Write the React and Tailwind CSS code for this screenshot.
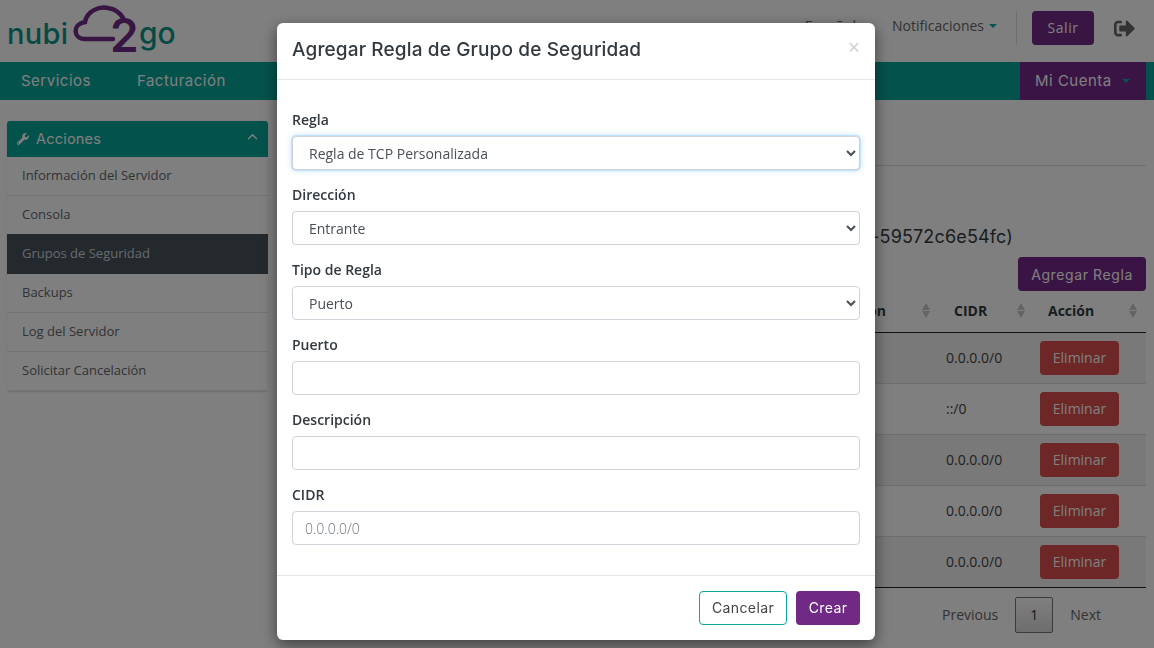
import React from "react";
import { FaWrench, FaSignOutAlt } from "react-icons/fa";
import { FaChevronUp } from "react-icons/fa6";

const sans = "font-['Open_Sans',sans-serif]";
const wide = "font-['Inter',sans-serif]";

function Logo() {
  return (
    <svg width="190" height="62" viewBox="0 -3 190 62" className="block">
      <text x="6" y="41" fill="#0c9488" fontFamily="Inter, sans-serif" fontSize="29" fontWeight="500" letterSpacing="0.3">nubi</text>
      <path d="M112 36 H84 C72 36 71 21 84 19 C86 8 98 3 107 5 C114 6 119 10 122 15" fill="none" stroke="#702a86" strokeWidth="4.5" strokeLinecap="round" />
      <text x="109" y="49" fill="#702a86" fontFamily="Inter, sans-serif" fontSize="46" fontWeight="600">2</text>
      <text x="138" y="41" fill="#0c9488" fontFamily="Inter, sans-serif" fontSize="30" fontWeight="500">go</text>
    </svg>
  );
}

function Sort() {
  return (
    <span className="flex flex-col gap-[1px]">
      <span className="w-0 h-0 border-x-[4px] border-x-transparent border-b-[7px] border-b-[#c8c8c8]" />
      <span className="w-0 h-0 border-x-[4px] border-x-transparent border-t-[7px] border-t-[#c8c8c8]" />
    </span>
  );
}

function Caret({ color = "border-t-[#0fa99d]" }) {
  return <span className={`inline-block w-0 h-0 border-x-[4px] border-x-transparent border-t-[4px] ${color}`} />;
}

function Field({ label, children, mb = "mb-[14px]" }) {
  return (
    <div className={mb}>
      <label className="block mb-[6px] text-[14px] leading-[21px] font-semibold text-[#333a3f]">{label}</label>
      {children}
    </div>
  );
}

const selectCls = "block w-full h-[34px] pl-3 pr-0 bg-white border border-[#ced4da] rounded-[4px] text-[14px] text-[#495057] outline-none";
const inputCls = "block w-full h-[34px] px-3 bg-white border border-[#ced4da] rounded-[4px] text-[14px] font-light text-[#495057] outline-none placeholder:text-[#6c757d]";

const side = ["Información del Servidor", "Consola", "Grupos de Seguridad", "Backups", "Log del Servidor", "Solicitar Cancelación"];
const rows = ["0.0.0.0/0", "::/0", "0.0.0.0/0", "0.0.0.0/0", "0.0.0.0/0"];

export default function App() {
  return (
    <div className={`relative h-screen overflow-hidden bg-white text-[#333a3f] ${sans}`}>
      <header className="flex h-[62px] items-center justify-between pl-[1px] pr-[19px]">
        <Logo />
        <div className="flex items-center -mt-[6px] text-[14px] text-[#666]">
          <span className="mr-[36px] -mt-[5px]">Español</span>
          <span className="flex items-center gap-[5px] -mt-[5px]">Notificaciones <Caret /></span>
          <span className="ml-[19px] mr-[15px] w-px h-[34px] bg-[#ddd]" />
          <button className="h-[34px] w-[62px] pb-[1px] rounded-[4px] bg-[#702a86] text-white text-[14px] tracking-[0.6px]">Salir</button>
          <FaSignOutAlt className="ml-[20px] text-[#666] text-[21px]" />
        </div>
      </header>

      <nav className={`flex h-[38px] items-center justify-between pl-[21px] pr-[8px] bg-[#08a598] text-white text-[15px] tracking-[0.5px] ${wide}`}>
        <div className="flex gap-[46px]">
          <span>Servicios</span>
          <span>Facturación</span>
        </div>
        <div className="flex h-full w-[126px] items-center gap-[10px] pl-[15px] bg-[#742888]">
          <span>Mi Cuenta</span>
          <Caret />
        </div>
      </nav>

      <div className="flex pt-[21px] pl-[7px] pr-[8px]">
        <aside className="w-[261px] shrink-0">
          <div className="rounded-[3px] shadow-[0_1px_2px_rgba(0,0,0,0.15)] overflow-hidden">
            <div className={`flex h-[36px] items-center justify-between pl-[10px] pr-[10px] bg-[#08a598] text-white text-[14.5px] tracking-[0.2px] ${wide}`}>
              <span className="flex items-center gap-[7px]"><FaWrench className="text-[12px]" /> Acciones</span>
              <FaChevronUp className="text-[11px] -mt-[4px]" />
            </div>
            {side.map((s, i) => (
              <div key={s} className={`flex items-center pl-[15px] border-b text-[13px] font-medium ${i === 2 ? "h-[40px] -mt-[1px] border-[#48525a] bg-[#48525a] text-[#ced4da]" : "h-[39px] border-[#e6e6e6] bg-white text-[#5f676e]"}`}>{s}</div>
            ))}
          </div>
        </aside>

        <main className="flex-1 min-w-0 pl-[12px]">
          <div className="h-[45px] border-b border-[#ddd]" />
          <div className={`flex justify-end mt-[55px] h-[30px] items-center whitespace-nowrap text-[18px] tracking-[0.15px] pr-[133px] text-[#333a3f] ${wide}`}>
            (7b1f3e12-4c5a-4d2e-9a1b-59572c6e54fc)
          </div>
          <div className="flex justify-end mt-[6px]">
            <button className={`h-[34px] w-[128px] rounded-[4px] bg-[#742888] text-white text-[14px] tracking-[0.6px] ${wide}`}>Agregar Regla</button>
          </div>
          <table className="w-full mt-[6px] table-fixed border-b border-[#222] text-[14px]">
            <thead>
              <tr className="h-[35px] border-b border-[#222] text-[14px] font-semibold">
                <th className="align-top pt-[3px]"><span className="flex items-center justify-end gap-[36px]">Dirección <Sort /></span></th>
                <th className="w-[100px] align-top pt-[3px] pl-[24px] pr-[5px]"><span className="flex items-center justify-between">CIDR <Sort /></span></th>
                <th className="w-[116px] align-top pt-[3px] pl-[18px] pr-[9px]"><span className="flex items-center justify-between">Acción <Sort /></span></th>
              </tr>
            </thead>
            <tbody>
              {rows.map((r, i) => (
                <tr key={i} className={`h-[51px] border-b border-[#ddd] last:border-b-0 ${i % 2 === 0 ? "bg-[#f2f2f2]" : "bg-white"}`}>
                  <td />
                  <td className="pl-[16px] text-[#444]">{r}</td>
                  <td className="pl-[10px]">
                    <button className="h-[34px] w-[79px] rounded-[4px] bg-[#d94f4c] text-white text-[14px]">Eliminar</button>
                  </td>
                </tr>
              ))}
            </tbody>
          </table>
          <div className="flex items-center justify-end mt-[9px] pr-[45px] text-[14px] text-[#666]">
            <span>Previous</span>
            <span className="mx-[17px] flex h-[36px] w-[38px] items-center justify-center rounded-[2px] border border-[#777] bg-gradient-to-b from-white to-[#dcdcdc] text-[#333]">1</span>
            <span>Next</span>
          </div>
        </main>
      </div>

      <div className="fixed inset-0 bg-black/50">
        <div className="ml-[277px] mt-[23px] flex h-[617px] w-[598px] flex-col rounded-[6px] bg-white shadow-[0_5px_15px_rgba(0,0,0,0.5)]">
          <div className="flex h-[57px] shrink-0 items-center justify-between border-b border-[#e5e5e5] pl-[15px] pr-[15px]">
            <h4 className={`-mt-[1px] text-[19px] font-medium tracking-[0.14px] text-[#333a3f] ${wide}`}>Agregar Regla de Grupo de Seguridad</h4>
            <span className="-mt-[8px] text-[21px] leading-none text-[#cfcfcf]">×</span>
          </div>
          <div className="flex-1 pt-[29px] px-[15px]">
            <Field label="Regla">
              <select className={`${selectCls} border-[#5cb3fd] shadow-[0_0_0_1px_rgba(92,179,253,0.25),0_0_6px_rgba(92,179,253,0.45)]`} defaultValue="tcp">
                <option value="tcp">Regla de TCP Personalizada</option>
              </select>
            </Field>
            <Field label="Dirección">
              <select className={selectCls}><option>Entrante</option></select>
            </Field>
            <Field label="Tipo de Regla">
              <select className={selectCls}><option>Puerto</option></select>
            </Field>
            <Field label="Puerto">
              <input className={inputCls} />
            </Field>
            <Field label="Descripción">
              <input className={inputCls} />
            </Field>
            <Field label="CIDR" mb="mb-0">
              <input className={inputCls} placeholder="0.0.0.0/0" />
            </Field>
          </div>
          <div className={`flex h-[65px] shrink-0 items-start justify-end gap-[9px] border-t border-[#e5e5e5] pt-[15px] pr-[15px] text-[14px] tracking-[0.4px] ${wide}`}>
            <button className="h-[34px] w-[88px] pb-[2px] rounded-[4px] border border-[#0aa99d] bg-white text-[#444]">Cancelar</button>
            <button className="h-[34px] w-[64px] pb-[2px] rounded-[4px] bg-[#702a86] text-white">Crear</button>
          </div>
        </div>
      </div>
    </div>
  );
}
